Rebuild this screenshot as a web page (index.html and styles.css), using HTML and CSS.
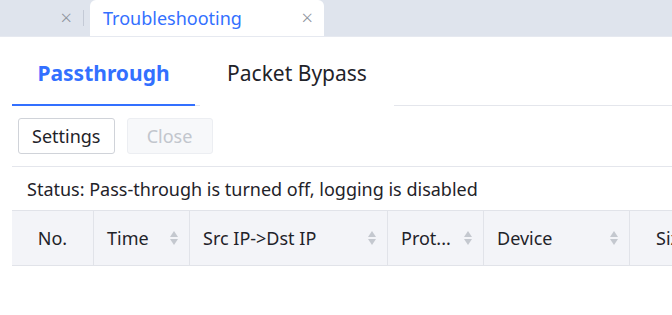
FILE: index.html
```html
<!DOCTYPE html>
<html>
<head>
<meta charset="utf-8">
<link rel="stylesheet" href="styles.css">
</head>
<body>
<div class="tabbar">
  <div class="tab-prev">
    <span class="x">×</span>
    <span class="sep"></span>
  </div>
  <div class="tab-active">
    <span class="tab-title">Troubleshooting</span>
    <span class="x">×</span>
  </div>
</div>
<div class="content">
  <div class="nav">
    <div class="nav-item active">Passthrough</div>
    <div class="nav-item other">Packet Bypass</div>
    <div class="nav-rest"></div>
  </div>
  <div class="toolbar">
    <button class="btn">Settings</button>
    <button class="btn disabled">Close</button>
  </div>
  <div class="status">Status: Pass-through is turned off, logging is disabled</div>
  <div class="thead">
    <div class="th c-no center">No.</div>
    <div class="th c-time">Time<span class="sort"><i class="up"></i><i class="down"></i></span></div>
    <div class="th c-ip">Src IP-&gt;Dst IP<span class="sort"><i class="up"></i><i class="down"></i></span></div>
    <div class="th c-prot">Prot...<span class="sort"><i class="up"></i><i class="down"></i></span></div>
    <div class="th c-dev">Device<span class="sort"><i class="up"></i><i class="down"></i></span></div>
    <div class="th c-size">Size</div>
  </div>
</div>
</body>
</html>
```
FILE: styles.css
```css
* { box-sizing: border-box; }
html, body { margin: 0; padding: 0; }
body {
  width: 672px;
  height: 315px;
  overflow: hidden;
  background: #fff;
  font-family: "Noto Sans", "Open Sans", sans-serif;
  color: #1f2329;
}
.tabbar {
  display: flex;
  height: 37px;
  background: #dfe4ed;
  border-bottom: 1px solid #e6e9f0;
}
.tab-prev {
  width: 90px;
  display: flex;
  align-items: center;
  justify-content: flex-end;
}
.tab-prev .x { margin-right: 11px; }
.x {
  color: #8f959e;
  font-size: 20px;
  line-height: 1;
  font-weight: 300;
}
.sep {
  width: 1px;
  height: 16px;
  background: #c4cad6;
  margin-right: 6px;
}
.tab-active {
  width: 234px;
  background: #fff;
  border-radius: 6px 6px 0 0;
  display: flex;
  align-items: center;
  padding-left: 13px;
  padding-right: 11px;
  justify-content: space-between;
}
.tab-title {
  color: #3370ff;
  font-size: 18px;
}
.content { padding: 0 0 0 12px; }
.nav {
  display: flex;
  height: 69px;
  align-items: stretch;
  background: linear-gradient(#e4e6ec, #e4e6ec) 183px 100% / 5px 1px no-repeat;
}
.nav-item {
  display: flex;
  align-items: center;
  justify-content: center;
  font-size: 21px;
  padding-top: 4px;
  flex-shrink: 0;
}
.nav-item.active {
  width: 183px;
  color: #3370ff;
  font-weight: 700;
  border-bottom: 2px solid #3370ff;
}
.nav-item.other {
  width: 194px;
  color: #1f2329;
  margin-left: 5px;
  border-bottom: 2px solid #fff;
}
.nav-rest {
  flex: 1;
  border-bottom: 1px solid #e4e6ec;
}
.toolbar {
  display: flex;
  gap: 12px;
  padding: 12px 0 12px 6px;
  border-bottom: 1px solid #e4e6ec;
}
.btn {
  height: 36px;
  padding: 0 13px;
  font-family: inherit;
  font-size: 18px;
  color: #1f2329;
  background: #fff;
  border: 1px solid #d0d3d9;
  border-radius: 3px;
}
.btn.disabled {
  width: 86px;
  color: #c2c6cd;
  background: #f7f8fa;
  border-color: #eceef2;
}
.status {
  height: 43px;
  display: flex;
  align-items: center;
  padding-left: 15px;
  font-size: 18px;
  color: #1f2329;
  white-space: nowrap;
}
.thead {
  display: flex;
  height: 56px;
  background: #f3f4f8;
  border-top: 1px solid #e1e3e9;
  border-bottom: 1px solid #e1e3e9;
}
.th {
  display: flex;
  align-items: center;
  padding-left: 13px;
  padding-right: 11px;
  font-size: 18px;
  border-right: 1px solid #e1e3e9;
  white-space: nowrap;
  flex-shrink: 0;
}
.th.center { justify-content: center; padding: 0; }
.c-no { width: 82px; }
.c-time { width: 96px; }
.c-ip { width: 198px; }
.c-prot { width: 96px; }
.c-dev { width: 146px; }
.c-size { width: 120px; border-right: none; padding-left: 26px; }
.sort {
  margin-left: auto;
  display: flex;
  flex-direction: column;
  gap: 2px;
}
.sort i {
  display: block;
  width: 0;
  height: 0;
  border-left: 4.5px solid transparent;
  border-right: 4.5px solid transparent;
}
.sort .up { border-bottom: 6px solid #c4c8cf; }
.sort .down { border-top: 6px solid #c4c8cf; }
```
